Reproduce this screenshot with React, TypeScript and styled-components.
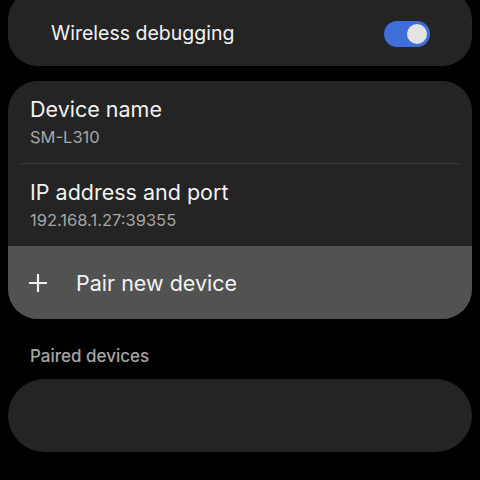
import React from 'react';
import styled, {createGlobalStyle} from 'styled-components';

const colors = {
    page: '#000000',
    card: '#242424',
    pair: '#525252',
    title: '#f2f2f2',
    sub: '#a6a6a6',
    divider: '#3c3c3c',
    toggle: '#3e6fd8',
    knob: '#e3e3e6',
};

const GlobalStyle = createGlobalStyle`
    html, body {
        margin: 0;
        padding: 0;
        background: ${colors.page};
        font-family: Inter, "Noto Sans", sans-serif;
        -webkit-font-smoothing: antialiased;
    }
`;

const Page = styled.div`
    width: 480px;
    height: 480px;
    overflow: hidden;
    box-sizing: border-box;
    padding: 0 8px;
    display: flex;
    flex-direction: column;
`;

const Card = styled.div<{ $top?: boolean }>`
    background: ${colors.card};
    border-radius: 30px;
    overflow: hidden;
    margin-top: ${p => (p.$top ? '-10px' : '0')};
`;

const SwitchRow = styled.div`
    height: 76px;
    box-sizing: border-box;
    padding: 10px 42px 0 43px;
    display: flex;
    align-items: center;
    justify-content: space-between;
`;

const SwitchLabel = styled.span`
    font-size: 19.5px;
    color: ${colors.title};
`;

const Toggle = styled.div<{ $on: boolean }>`
    width: 46px;
    height: 26px;
    border-radius: 13px;
    background: ${p => (p.$on ? colors.toggle : '#555')};
    display: flex;
    align-items: center;
    justify-content: ${p => (p.$on ? 'flex-end' : 'flex-start')};
    padding: 0 3px;
    box-sizing: border-box;
    margin-top: 1px;
`;

const Knob = styled.div`
    width: 20px;
    height: 20px;
    border-radius: 50%;
    background: ${colors.knob};
`;

const Gap = styled.div<{ $h: number }>`
    height: ${p => p.$h}px;
    flex-shrink: 0;
`;

const InfoRow = styled.div`
    padding: 0 22px;
    height: 82px;
    box-sizing: border-box;
    display: flex;
    flex-direction: column;
    justify-content: center;
`;

const Divider = styled.div`
    height: 1px;
    margin: 0 13px;
    background: ${colors.divider};
`;

const Title = styled.div`
    font-size: 21.5px;
    color: ${colors.title};
    line-height: 26px;
`;

const Sub = styled.div`
    font-size: 16.5px;
    color: ${colors.sub};
    line-height: 22px;
    margin-top: 4px;
`;

const PairRow = styled.div`
    background: ${colors.pair};
    height: 73px;
    display: flex;
    align-items: center;
    padding: 0 20px;
    gap: 28px;
`;

const PairLabel = styled.span`
    font-size: 21.5px;
    color: ${colors.title};
`;

const SectionLabel = styled.div`
    font-size: 17px;
    font-weight: 500;
    color: ${colors.sub};
    padding: 0 0 13px 22px;
    height: 60px;
    box-sizing: border-box;
    display: flex;
    align-items: flex-end;
`;

const EmptyCard = styled.div`
    background: ${colors.card};
    border-radius: 37px;
    height: 73px;
`;

const PlusIcon = () => (
    <svg width="20" height="20" viewBox="0 0 20 20" fill="none" stroke={colors.title} strokeWidth="2.2">
        <path d="M10 1v18M1 10h18"/>
    </svg>
);

export default function App() {
    return (
        <>
            <GlobalStyle/>
            <Page>
                <Card $top>
                    <SwitchRow>
                        <SwitchLabel>Wireless debugging</SwitchLabel>
                        <Toggle $on><Knob/></Toggle>
                    </SwitchRow>
                </Card>
                <Gap $h={15}/>
                <Card>
                    <InfoRow>
                        <Title>Device name</Title>
                        <Sub>SM-L310</Sub>
                    </InfoRow>
                    <Divider/>
                    <InfoRow>
                        <Title>IP address and port</Title>
                        <Sub>192.168.1.27:39355</Sub>
                    </InfoRow>
                    <PairRow>
                        <PlusIcon/>
                        <PairLabel>Pair new device</PairLabel>
                    </PairRow>
                </Card>
                <SectionLabel>Paired devices</SectionLabel>
                <EmptyCard/>
            </Page>
        </>
    );
}
